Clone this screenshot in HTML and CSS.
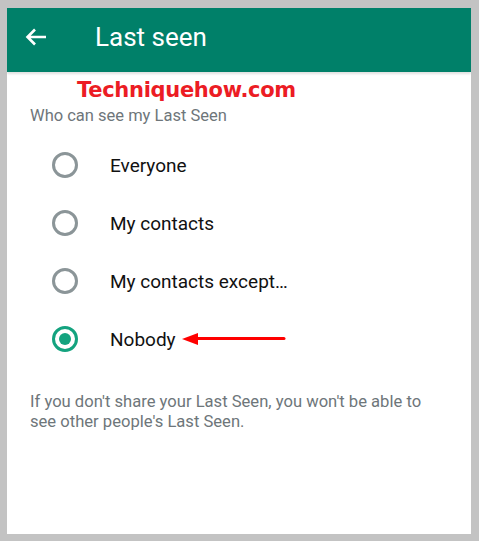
FILE: index.html
```html
<!DOCTYPE html>
<html lang="en">
<head>
    <meta charset="UTF-8">
    <meta name="viewport" content="width=device-width, initial-scale=1.0">
    <title>Last seen</title>
    <link rel="stylesheet" href="styles.css">
</head>
<body>

    <div class="screen">
        <header class="app-bar">
            <svg class="back" width="22" height="18" viewBox="0 0 22 18">
                <path d="M21 9H3M10 1.5L2.5 9L10 16.5" fill="none" stroke="#fff" stroke-width="2.6"/>
            </svg>
            <h1>Last seen</h1>
        </header>

        <div class="watermark">Techniquehow.com</div>

        <p class="section-title">Who can see my Last Seen</p>

        <ul class="options">
            <li><span class="radio"></span>Everyone</li>
            <li><span class="radio"></span>My contacts</li>
            <li><span class="radio"></span>My contacts except…</li>
            <li>
                <span class="radio checked"></span>Nobody
                <svg class="pointer" width="104" height="14" viewBox="0 0 104 14">
                    <path d="M102 6.5H14" stroke="#f00" stroke-width="3" stroke-linecap="round"/>
                    <path d="M0 7L16 1V13Z" fill="#f00"/>
                </svg>
            </li>
        </ul>

        <p class="note">If you don't share your Last Seen, you won't be able to see other people's Last Seen.</p>
    </div>

</body>
</html>
```

FILE: styles.css
```css
body {
    margin: 0;
    background-color: #c3c3c3;
    font-family: Roboto, "Liberation Sans", sans-serif;
}

.screen {
    margin: 8px 8px 7px 7px;
    height: 526px;
    background-color: #fff;
    overflow: hidden;
}

.app-bar {
    height: 64px;
    box-sizing: border-box;
    padding: 0 0 7px 18px;
    background-color: #008069;
    display: flex;
    align-items: center;
    box-shadow: 0 2px 2px rgba(0, 0, 0, 0.12);
}

.back {
    margin-top: 1px;
}

.app-bar h1 {
    margin: 0 0 0 48px;
    font-size: 26px;
    font-weight: 400;
    color: #fff;
}

.watermark {
    margin: 4px 0 0 70px;
    font-family: "DejaVu Sans", sans-serif;
    font-weight: bold;
    font-size: 21px;
    color: #ec1c24;
    letter-spacing: -0.3px;
    line-height: 28px;
}

.section-title {
    margin: 2px 0 0 23px;
    font-size: 16.5px;
    color: #6e767a;
    line-height: 20px;
}

.options {
    list-style: none;
    margin: 10px 0 0 0;
    padding: 0;
}

.options li {
    height: 58px;
    display: flex;
    align-items: center;
    padding-left: 45px;
    font-size: 19px;
    color: #111;
}

.radio {
    width: 20px;
    height: 20px;
    border: 3px solid #8b9598;
    border-radius: 50%;
    margin-right: 32px;
    display: flex;
    align-items: center;
    justify-content: center;
}

.radio.checked {
    border-color: #14a37f;
}

.radio.checked::after {
    content: "";
    width: 12px;
    height: 12px;
    border-radius: 50%;
    background-color: #14a37f;
}

.pointer {
    margin-left: 6px;
}

.note {
    margin: 24px 40px 0 23px;
    font-size: 16.6px;
    line-height: 20px;
    color: #6e767a;
}
```
